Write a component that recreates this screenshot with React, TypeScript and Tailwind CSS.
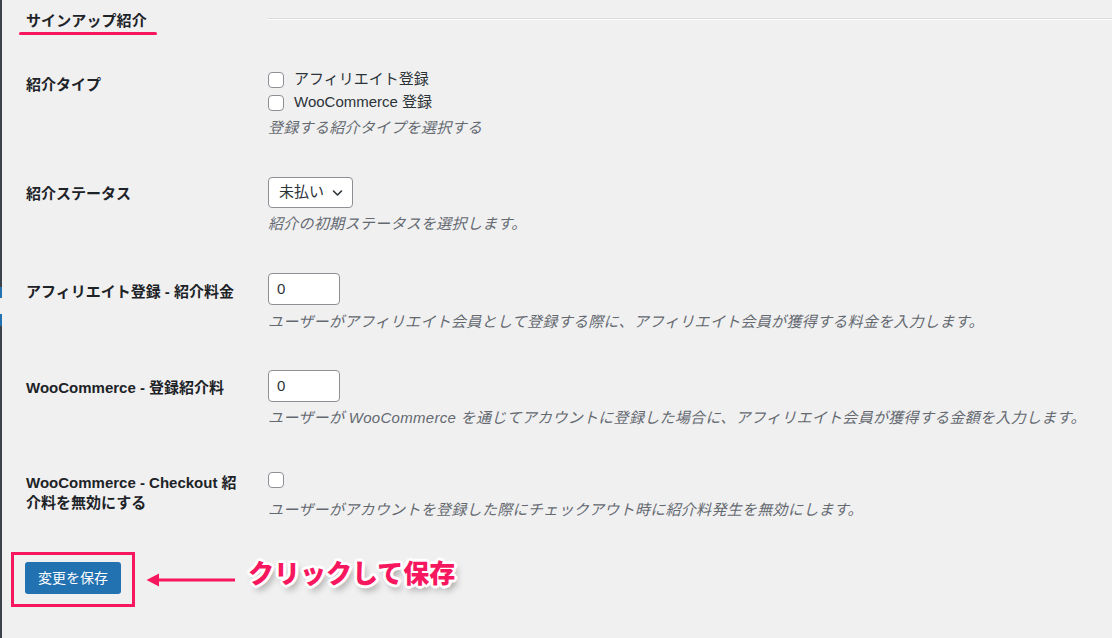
import React from "react";

const font = { fontFamily: '"Liberation Sans", "Noto Sans CJK JP", sans-serif' };

function Checkbox() {
  return <span className="inline-block w-[16px] h-[16px] shrink-0 rounded-[4px] border border-[#8c8f94] bg-white" />;
}

function Desc({ children, className = "" }: { children: React.ReactNode; className?: string }) {
  return <p className={"text-[15px] leading-[22px] italic tracking-[0.3px] text-[#646970] whitespace-nowrap " + className}>{children}</p>;
}

function Label({ children, className = "" }: { children: React.ReactNode; className?: string }) {
  return (
    <div className="w-[242px] shrink-0">
      <div className={"w-[218px] text-[15px] font-semibold text-[#1d2327] " + className}>{children}</div>
    </div>
  );
}

export default function App() {
  return (
    <div className="w-[1112px] h-[638px] overflow-hidden bg-[#f0f0f1] flex" style={font}>
      <div className="w-[2px] shrink-0 flex flex-col">
        <div className="h-[287px] bg-[#3c434a]" />
        <div className="h-[11px] bg-[#2271b1]" />
        <div className="h-[16px] bg-[#f0f0f1]" />
        <div className="h-[12px] bg-[#2271b1]" />
        <div className="flex-1 bg-[#3c434a]" />
      </div>
      <div className="flex-1 flex flex-col">
        {/* header */}
        <div className="flex items-start">
          <div className="ml-[17px] w-[248px] shrink-0 pt-[11px]">
            <div className="pl-[7px] text-[15px] leading-[20px] font-bold tracking-[0.1px] text-[#1d2327]">サインアップ紹介</div>
            <div className="mt-[1px] w-[138px] h-[3px] rounded-full bg-[#f7175f]" />
          </div>
          <div className="flex-1 mt-[18px]">
            <div className="h-[1px] bg-[#dcdcde]" />
            <div className="h-[1px] bg-white" />
          </div>
        </div>

        <div className="pl-[24px]">
          {/* row 1 */}
          <div className="flex items-start mt-[33px]">
            <Label className="pt-[6px] leading-[22px]">紹介タイプ</Label>
            <div>
              <div className="h-[23px] flex items-center gap-[10px] text-[15px] text-[#2c3338]">
                <Checkbox />
                <span>アフィリエイト登録</span>
              </div>
              <div className="h-[23px] flex items-center gap-[10px] text-[15px] text-[#2c3338]">
                <Checkbox />
                <span>WooCommerce 登録</span>
              </div>
              <Desc className="mt-[3px]">登録する紹介タイプを選択する</Desc>
            </div>
          </div>

          {/* row 2 */}
          <div className="flex items-start mt-[38px]">
            <Label className="pt-[6px] leading-[22px]">紹介ステータス</Label>
            <div>
              <div className="w-[85px] h-[31px] rounded-[4px] border border-[#8c8f94] bg-white flex items-center pl-[10px] pr-[9px] justify-between text-[15px] text-[#2c3338]">
                <span>未払い</span>
                <svg width="11" height="8" viewBox="0 0 11 8" fill="none">
                  <path d="M1.5 2 L5.5 6 L9.5 2" stroke="#2c3338" strokeWidth="1.6" strokeLinecap="round" strokeLinejoin="round" />
                </svg>
              </div>
              <Desc className="mt-[5px]">紹介の初期ステータスを選択します。</Desc>
            </div>
          </div>

          {/* row 3 */}
          <div className="flex items-start mt-[38px]">
            <Label className="pt-[8px] leading-[22px]">アフィリエイト登録 - 紹介料金</Label>
            <div>
              <div className="w-[72px] h-[32px] rounded-[4px] border border-[#8c8f94] bg-white flex items-center pl-[8px] text-[15px] text-[#2c3338]">0</div>
              <Desc className="mt-[6px]">ユーザーがアフィリエイト会員として登録する際に、アフィリエイト会員が獲得する料金を入力します。</Desc>
            </div>
          </div>

          {/* row 4 */}
          <div className="flex items-start mt-[37px]">
            <Label className="pt-[7px] leading-[22px]">WooCommerce - 登録紹介料</Label>
            <div>
              <div className="w-[72px] h-[32px] rounded-[4px] border border-[#8c8f94] bg-white flex items-center pl-[8px] text-[15px] text-[#2c3338]">0</div>
              <Desc className="mt-[5px]">ユーザーが WooCommerce を通じてアカウントに登録した場合に、アフィリエイト会員が獲得する金額を入力します。</Desc>
            </div>
          </div>

          {/* row 5 */}
          <div className="flex items-start mt-[42px]">
            <Label className="pt-[2px] leading-[20px]">WooCommerce - Checkout 紹介料を無効にする</Label>
            <div>
              <Checkbox />
              <Desc className="mt-[4px]">ユーザーがアカウントを登録した際にチェックアウト時に紹介料発生を無効にします。</Desc>
            </div>
          </div>
        </div>

        {/* save row */}
        <div className="flex items-center pl-[9px] mt-[31px]">
          <div className="border-[3px] border-[#f7175f] pl-[11px] pr-[11px] pt-[7px] pb-[10px]">
            <button className="w-[96px] h-[32px] rounded-[3px] bg-[#2271b1] text-white text-[14px] flex items-center justify-center">変更を保存</button>
          </div>
          <svg className="ml-[11px]" width="90" height="20" viewBox="0 0 90 20" fill="none">
            <path d="M10 10 H89" stroke="#f7175f" strokeWidth="3" />
            <path d="M0.5 10 L13 3.5 L13 16.5 Z" fill="#f7175f" />
          </svg>
          <span
            className="ml-[12px] mb-[12px] text-[26px] leading-[30px] font-black text-[#f7175f] whitespace-nowrap [text-shadow:2px_0_0_#fff,-2px_0_0_#fff,0_2px_0_#fff,0_-2px_0_#fff,2px_2px_0_#fff,-2px_-2px_0_#fff,2px_-2px_0_#fff,-2px_2px_0_#fff,3px_0_0_#fff,-3px_0_0_#fff,0_3px_0_#fff,0_-3px_0_#fff,3px_5px_7px_rgba(0,0,0,0.4)]"
          >
            クリックして保存
          </span>
        </div>
      </div>
    </div>
  );
}
